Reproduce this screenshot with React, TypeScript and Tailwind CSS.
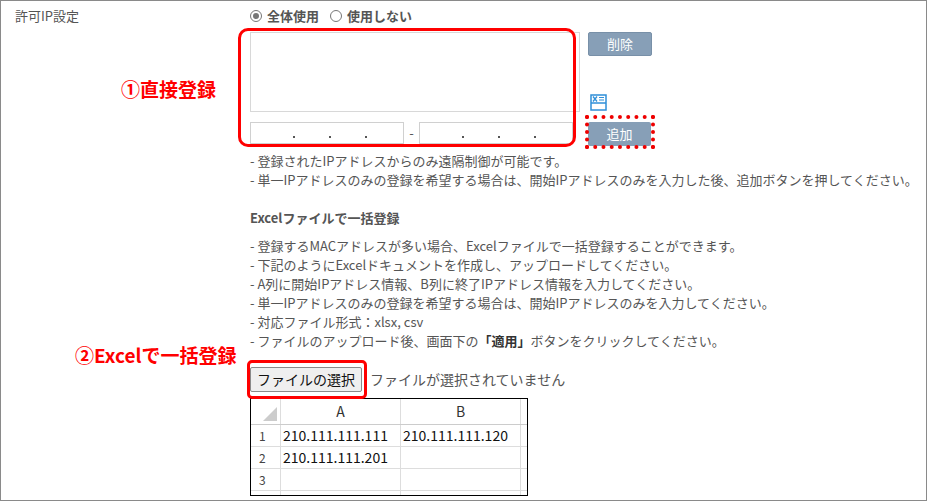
const font = { fontFamily: '"Noto Sans CJK JP", "Liberation Sans", sans-serif' };

function ExcelIcon() {
  return (
    <svg width="17" height="17" viewBox="0 0 17 17">
      <rect x="1" y="1" width="15" height="15" fill="#fff" stroke="#2f8fd8" strokeWidth="1.5" />
      <path d="M1 9h15" stroke="#2f8fd8" strokeWidth="1.5" />
      <path d="M3 2.5l4 5M7 2.5l-4 5" stroke="#2f8fd8" strokeWidth="1.3" />
      <path d="M9 3.5h5M9 6h5" stroke="#2f8fd8" strokeWidth="1.2" />
    </svg>
  );
}

function IpBox() {
  return (
    <div className="flex h-[22px] w-[154px] items-end justify-center gap-[34px] border border-[#d0d0d0] pb-[5px] pl-[6px]">
      <span className="h-[2px] w-[2px] bg-[#555]" />
      <span className="h-[2px] w-[2px] bg-[#555]" />
      <span className="h-[2px] w-[2px] bg-[#555]" />
    </div>
  );
}

const notes = [
  "- 登録するMACアドレスが多い場合、Excelファイルで一括登録することができます。",
  "- 下記のようにExcelドキュメントを作成し、アップロードしてください。",
  "- A列に開始IPアドレス情報、B列に終了IPアドレス情報を入力してください。",
  "- 単一IPアドレスのみの登録を希望する場合は、開始IPアドレスのみを入力してください。",
  "- 対応ファイル形式：xlsx, csv",
];

export default function App() {
  return (
    <div className="relative h-[502px] w-[928px] overflow-hidden bg-white text-[13px] text-[#555]" style={font}>
      <div className="absolute inset-x-0 top-0 h-[501px] w-[927px] border border-[#8a8a8a]" />
      <div className="flex">
        <div className="w-[250px] shrink-0 pl-[15px] pt-[6px]">許可IP設定</div>
        <div className="flex flex-col pt-[6px]">
          <div className="flex items-center gap-[5px] font-bold leading-[20px]">
            <span className="flex h-[12px] w-[12px] items-center justify-center rounded-full border border-[#777]">
              <span className="h-[6px] w-[6px] rounded-full bg-[#777]" />
            </span>
            <span className="mr-[6px]">全体使用</span>
            <span className="h-[12px] w-[12px] rounded-full border border-[#777]" />
            <span>使用しない</span>
          </div>
          <div className="mt-[6px] flex">
            <div className="flex flex-col">
              <div className="h-[80px] w-[330px] border border-[#d8d8d8]" />
              <div className="mt-[10px] flex items-center">
                <IpBox />
                <span className="w-[15px] text-center">-</span>
                <IpBox />
              </div>
            </div>
            <div className="ml-[8px] flex flex-col">
              <div className="flex h-[24px] w-[64px] items-center justify-center rounded-[2px] border border-[#7890a8] bg-[#879fb7] text-white">削除</div>
              <div className="mt-[38px] ml-[2px]"><ExcelIcon /></div>
              <div className="mt-[11px] flex h-[24px] w-[63px] items-center justify-center rounded-[2px] bg-[#879fb7] text-white">追加</div>
            </div>
          </div>
          <div className="mt-[5px] leading-[19px]">
            <div>- 登録されたIPアドレスからのみ遠隔制御が可能です。</div>
            <div>- 単一IPアドレスのみの登録を希望する場合は、開始IPアドレスのみを入力した後、追加ボタンを押してください。</div>
          </div>
          <div className="mt-[19px] font-bold leading-[19px]">Excelファイルで一括登録</div>
          <div className="mt-[9px] leading-[19px]">
            {notes.map((n) => <div key={n}>{n}</div>)}
            <div>- ファイルのアップロード後、画面下の<b className="text-[#333]">「適用」</b>ボタンをクリックしてください。</div>
          </div>
          <div className="mt-[17px] flex items-center gap-[8px] text-[14px]">
            <div className="flex h-[25px] items-center rounded-[2px] border border-[#8a8a8a] bg-[#efefef] px-[6px] text-[#111]">ファイルの選択</div>
            <span className="text-[#555]">ファイルが選択されていません</span>
          </div>
          <div className="mt-[6px] h-[98px] w-[278px] overflow-hidden border border-black text-[14px] text-[#111]">
            <div className="grid grid-cols-[30px_120px_120px_10px] border-b border-[#ccc] h-[26px] text-[#333]">
              <div className="relative border-r border-[#ddd]">
                <div className="absolute bottom-[3px] right-[3px] h-0 w-0 border-b-[14px] border-l-[14px] border-b-[#ccc] border-l-transparent" />
              </div>
              <div className="flex items-center justify-center border-r border-[#ddd]">A</div>
              <div className="flex items-center justify-center border-r border-[#ddd]">B</div>
              <div />
            </div>
            {[["1", "210.111.111.111", "210.111.111.120"], ["2", "210.111.111.201", ""], ["3", "", ""], ["", "", ""]].map((r, i) => (
              <div key={i} className="grid h-[22px] grid-cols-[30px_120px_120px_10px] border-b border-[#ddd]">
                <div className="flex items-center pl-[8px] text-[12px] text-[#444] border-r border-[#ddd]">{r[0]}</div>
                <div className="flex items-center pl-[2px] border-r border-[#ddd]">{r[1]}</div>
                <div className="flex items-center pl-[2px] border-r border-[#ddd]">{r[2]}</div>
                <div />
              </div>
            ))}
          </div>
        </div>
      </div>

      {/* annotations */}
      <div className="absolute left-[238px] top-[28px] h-[119px] w-[338px] rounded-[10px] border-[3px] border-[#f00]" />
      <div className="absolute left-[585px] top-[115px] h-[34px] w-[70px] border-[4px] border-dotted border-[#e00]" />
      <div className="absolute left-[247px] top-[360px] h-[39px] w-[120px] rounded-[5px] border-[3px] border-[#f00]" />
      <div className="absolute left-[121px] top-[75px] text-[19px] font-bold text-[#f00]">①直接登録</div>
      <div className="absolute left-[75px] top-[341px] text-[19px] font-bold text-[#f00]">②Excelで一括登録</div>
    </div>
  );
}
